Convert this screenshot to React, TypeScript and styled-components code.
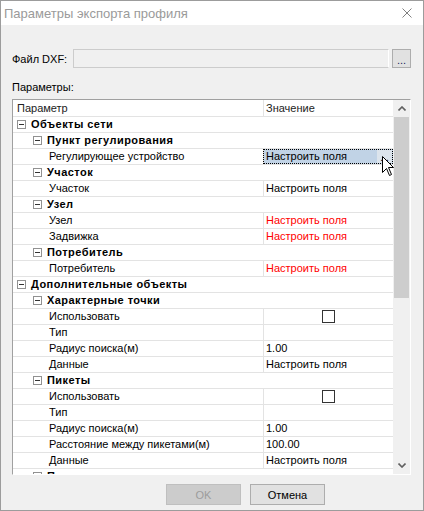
import React from 'react';
import styled, { createGlobalStyle } from 'styled-components';

const GlobalStyle = createGlobalStyle`
  html, body { margin: 0; padding: 0; background: #fff; }
  body {
    font-family: "Liberation Sans", Arial, sans-serif;
    font-size: 11px;
    color: #000;
  }
`;

const Window = styled.div`
  position: relative;
  width: 424px;
  height: 511px;
  box-sizing: border-box;
  border: 1px solid #9c9c9c;
  background: #f0f0f0;
  display: flex;
  flex-direction: column;
  overflow: hidden;
`;

const TitleBar = styled.div`
  height: 24px;
  background: #fff;
  display: flex;
  align-items: center;
  justify-content: space-between;
  padding: 0 11px 0 3px;
`;

const Title = styled.div`
  font-size: 13px;
  color: #9a9a9a;
`;

const Body = styled.div`
  display: flex;
  flex-direction: column;
  padding: 24px 12px 0 11px;
`;

const FileRow = styled.div`
  display: flex;
  align-items: center;
  height: 19px;
`;

const FieldLabel = styled.div`
  width: 61px;
`;

const TextField = styled.div`
  flex: 1;
  height: 19px;
  box-sizing: border-box;
  border: 1px solid #cccccc;
  border-right-color: #ffffff;
  background: #f0f0f0;
`;

const BrowseButton = styled.div`
  width: 19px;
  height: 19px;
  margin-left: 3px;
  box-sizing: border-box;
  border: 1px solid #adadad;
  background: #e1e1e1;
  display: flex;
  align-items: flex-end;
  justify-content: center;
  line-height: 13px;
  color: #1a1a60;
`;

const SectionLabel = styled.div`
  margin-top: 13px;
  margin-bottom: 5px;
  line-height: 13px;
`;

const GridBox = styled.div`
  height: 376px;
  box-sizing: border-box;
  border-top: 1px solid #a0a0a0;
  border-left: 1px solid #a0a0a0;
  border-right: 1px solid #ffffff;
  border-bottom: 1px solid #ffffff;
  display: flex;
  background: #ffffff;
`;

const GridContent = styled.div`
  flex: 1;
  overflow: hidden;
  display: flex;
  flex-direction: column;
`;

const HeaderRow = styled.div`
  display: flex;
  height: 16px;
  flex-shrink: 0;
  border-bottom: 1px solid #e3e3e3;
  background: #ffffff;
  line-height: 16px;
`;

const HeaderCell = styled.div<{ $first?: boolean }>`
  width: ${p => (p.$first ? '250px' : 'auto')};
  flex: ${p => (p.$first ? '0 0 250px' : '1')};
  box-sizing: border-box;
  padding-left: ${p => (p.$first ? '4px' : '2px')};
  border-left: ${p => (p.$first ? 'none' : '1px solid #e3e3e3')};
  color: #222;
`;

const Row = styled.div`
  display: flex;
  height: 15px;
  flex-shrink: 0;
  border-bottom: 1px solid #e3e3e3;
  line-height: 15px;
  white-space: nowrap;
`;

const CategoryCell = styled.div<{ $level: number }>`
  flex: 1;
  display: flex;
  align-items: center;
  padding-left: ${p => (p.$level === 0 ? 4 : 20)}px;
  font-weight: bold;
  letter-spacing: 0.45px;
`;

const ExpandBox = styled.div`
  position: relative;
  width: 9px;
  height: 9px;
  box-sizing: border-box;
  border: 1px solid #919191;
  background: #fff;
  margin-right: 5px;
  flex-shrink: 0;
  &::after {
    content: '';
    position: absolute;
    left: 1px;
    top: 3px;
    width: 5px;
    height: 1px;
    background: #333;
  }
`;

const NameCell = styled.div`
  flex: 0 0 250px;
  box-sizing: border-box;
  padding-left: 36px;
  overflow: hidden;
`;

const ValueCell = styled.div<{ $selected?: boolean; $red?: boolean; $center?: boolean }>`
  position: relative;
  flex: 1;
  box-sizing: border-box;
  border-left: 1px solid #e3e3e3;
  padding-left: 2px;
  display: flex;
  align-items: center;
  justify-content: ${p => (p.$center ? 'center' : 'flex-start')};
  color: ${p => (p.$red ? '#ff0000' : '#000')};
  background: ${p => (p.$selected ? '#c1d3e6' : 'transparent')};
  outline: ${p => (p.$selected ? '1px dotted #000' : 'none')};
  outline-offset: -1px;
`;

const CellButton = styled.div`
  position: absolute;
  right: 1px;
  top: 1px;
  bottom: 1px;
  width: 15px;
  background: #dce4ec;
  display: flex;
  align-items: flex-end;
  justify-content: center;
  line-height: 10px;
  font-size: 10px;
`;

const CheckBox = styled.div`
  width: 13px;
  height: 13px;
  box-sizing: border-box;
  border: 1px solid #333;
  background: #fff;
  margin-left: -2px;
`;

const ScrollBar = styled.div`
  width: 17px;
  flex-shrink: 0;
  background: #f0f0f0;
  display: flex;
  flex-direction: column;
`;

const ScrollArrow = styled.div`
  height: 17px;
  flex-shrink: 0;
  display: flex;
  align-items: center;
  justify-content: center;
`;

const ScrollTrack = styled.div`
  flex: 1;
  padding: 0 1px;
`;

const ScrollThumb = styled.div`
  height: 181px;
  background: #cdcdcd;
`;

const ButtonBar = styled.div`
  display: flex;
  gap: 9px;
  margin-top: 9px;
  padding-left: 154px;
`;

const DialogButton = styled.div<{ $disabled?: boolean }>`
  width: 75px;
  height: 21px;
  box-sizing: border-box;
  border: 1px solid ${p => (p.$disabled ? '#bfbfbf' : '#adadad')};
  background: ${p => (p.$disabled ? '#cccccc' : '#e1e1e1')};
  color: ${p => (p.$disabled ? '#9c9c9c' : '#000')};
  display: flex;
  align-items: center;
  justify-content: center;
`;

const Cursor = styled.svg`
  position: absolute;
  left: 381px;
  top: 155px;
`;

type Item =
  | { kind: 'cat'; level: number; name: string }
  | { kind: 'leaf'; name: string; value?: string; red?: boolean; check?: boolean; selected?: boolean };

const items: Item[] = [
  { kind: 'cat', level: 0, name: 'Объекты сети' },
  { kind: 'cat', level: 1, name: 'Пункт регулирования' },
  { kind: 'leaf', name: 'Регулирующее устройство', value: 'Настроить поля', selected: true },
  { kind: 'cat', level: 1, name: 'Участок' },
  { kind: 'leaf', name: 'Участок', value: 'Настроить поля' },
  { kind: 'cat', level: 1, name: 'Узел' },
  { kind: 'leaf', name: 'Узел', value: 'Настроить поля', red: true },
  { kind: 'leaf', name: 'Задвижка', value: 'Настроить поля', red: true },
  { kind: 'cat', level: 1, name: 'Потребитель' },
  { kind: 'leaf', name: 'Потребитель', value: 'Настроить поля', red: true },
  { kind: 'cat', level: 0, name: 'Дополнительные объекты' },
  { kind: 'cat', level: 1, name: 'Характерные точки' },
  { kind: 'leaf', name: 'Использовать', check: true },
  { kind: 'leaf', name: 'Тип' },
  { kind: 'leaf', name: 'Радиус поиска(м)', value: '1.00' },
  { kind: 'leaf', name: 'Данные', value: 'Настроить поля' },
  { kind: 'cat', level: 1, name: 'Пикеты' },
  { kind: 'leaf', name: 'Использовать', check: true },
  { kind: 'leaf', name: 'Тип' },
  { kind: 'leaf', name: 'Радиус поиска(м)', value: '1.00' },
  { kind: 'leaf', name: 'Расстояние между пикетами(м)', value: '100.00' },
  { kind: 'leaf', name: 'Данные', value: 'Настроить поля' },
  { kind: 'cat', level: 1, name: 'Подписи' },
];

const Chevron = ({ up }: { up?: boolean }) => (
  <svg width="8" height="5" viewBox="0 0 8 5">
    <polyline
      points={up ? '0.5,4.5 4,1 7.5,4.5' : '0.5,0.5 4,4 7.5,0.5'}
      fill="none"
      stroke="#606060"
      strokeWidth="1.6"
    />
  </svg>
);

export default function App() {
  return (
    <>
      <GlobalStyle />
      <Window>
        <TitleBar>
          <Title>Параметры экспорта профиля</Title>
          <svg width="10" height="10" viewBox="0 0 10 10">
            <path d="M0.5 0.5 L9.5 9.5 M9.5 0.5 L0.5 9.5" stroke="#808080" strokeWidth="1" />
          </svg>
        </TitleBar>
        <Body>
          <FileRow>
            <FieldLabel>Файл DXF:</FieldLabel>
            <TextField />
            <BrowseButton>...</BrowseButton>
          </FileRow>
          <SectionLabel>Параметры:</SectionLabel>
          <GridBox>
            <GridContent>
              <HeaderRow>
                <HeaderCell $first>Параметр</HeaderCell>
                <HeaderCell>Значение</HeaderCell>
              </HeaderRow>
              {items.map((it, i) =>
                it.kind === 'cat' ? (
                  <Row key={i}>
                    <CategoryCell $level={it.level}>
                      <ExpandBox />
                      {it.name}
                    </CategoryCell>
                  </Row>
                ) : (
                  <Row key={i}>
                    <NameCell>{it.name}</NameCell>
                    <ValueCell $selected={it.selected} $red={it.red} $center={it.check}>
                      {it.check ? <CheckBox /> : it.value}
                      {it.selected && <CellButton>...</CellButton>}
                    </ValueCell>
                  </Row>
                )
              )}
            </GridContent>
            <ScrollBar>
              <ScrollArrow>
                <Chevron up />
              </ScrollArrow>
              <ScrollTrack>
                <ScrollThumb />
              </ScrollTrack>
              <ScrollArrow>
                <Chevron />
              </ScrollArrow>
            </ScrollBar>
          </GridBox>
          <ButtonBar>
            <DialogButton $disabled>OK</DialogButton>
            <DialogButton>Отмена</DialogButton>
          </ButtonBar>
        </Body>
        <Cursor width="13" height="21" viewBox="0 0 13 21">
          <path
            d="M0.5 0.5 L0.5 16.5 L4.5 12.5 L7.5 19.5 L9.5 18.5 L6.5 11.5 L11.5 11.5 Z"
            fill="#fff"
            stroke="#000"
            strokeWidth="1"
            strokeLinejoin="miter"
          />
        </Cursor>
      </Window>
    </>
  );
}
